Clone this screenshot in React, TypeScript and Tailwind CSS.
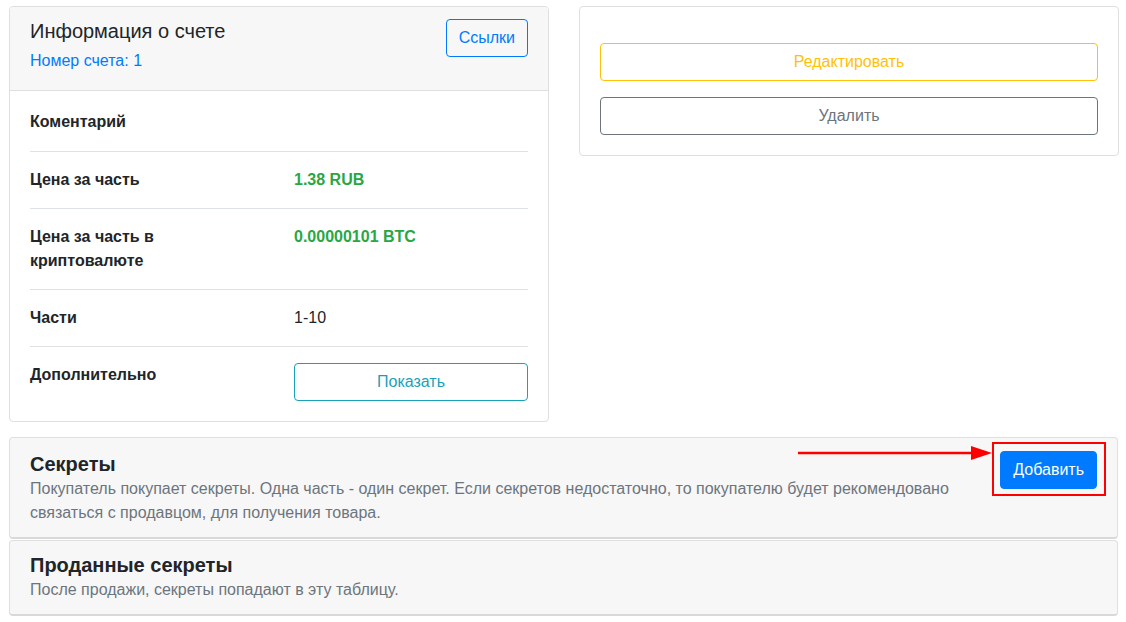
import React from "react";

const font = { fontFamily: '"Liberation Sans", Arial, sans-serif' };

function Row({
  label,
  children,
  first,
  last,
}: {
  label: React.ReactNode;
  children?: React.ReactNode;
  first?: boolean;
  last?: boolean;
}) {
  return (
    <div
      className={
        "flex " +
        (first ? "pb-[17px] " : "pt-[16px] border-t border-[#dee2e6] ") +
        (last ? "" : first ? "" : "pb-[16px]")
      }
    >
      <div className="w-[264px] shrink-0 pr-[15px] font-bold text-[16px] leading-[24px] text-[#212529]">
        <div className="max-w-[225px]">{label}</div>
      </div>
      <div className="flex-1 text-[16px] leading-[24px] text-[#212529]">{children}</div>
    </div>
  );
}

export default function App() {
  return (
    <div className="min-h-[622px] bg-white pl-[9px] pr-[7px] pt-[6px]" style={font}>
      <div className="grid grid-cols-2 gap-[30px] items-start">
        {/* Left card */}
        <div className="border border-[#dfdfdf] rounded-[4px] overflow-hidden">
          <div className="bg-[#f7f7f7] border-b border-[#dfdfdf] pl-[20px] pr-[20px] pt-[12px] pb-[17px] flex justify-between items-start">
            <div>
              <div className="text-[20px] leading-[24px] text-[#212529]">Информация о счете</div>
              <div className="mt-[6px] text-[16px] leading-[24px] text-[#007bff]">Номер счета: 1</div>
            </div>
            <button className="h-[38px] px-[12px] border border-[#007bff] rounded-[4px] text-[#007bff] text-[16px] leading-[24px] bg-transparent">
              Ссылки
            </button>
          </div>
          <div className="px-[20px] pt-[19px] pb-[20px]">
            <Row label="Коментарий" first />
            <Row label="Цена за часть">
              <span className="font-bold text-[#28a745]">1.38 RUB</span>
            </Row>
            <Row label="Цена за часть в криптовалюте">
              <span className="font-bold text-[#28a745]">0.00000101 BTC</span>
            </Row>
            <Row label="Части">1-10</Row>
            <Row label="Дополнительно" last>
              <button className="w-full h-[38px] border border-[#17a2b8] rounded-[4px] text-[#17a2b8] text-[16px] bg-transparent">
                Показать
              </button>
            </Row>
          </div>
        </div>

        {/* Right card */}
        <div className="border border-[#dfdfdf] rounded-[4px] px-[20px] pt-[36px] pb-[20px] flex flex-col gap-[16px]">
          <button className="w-full h-[38px] border border-[#ffc107] rounded-[4px] text-[#ffc107] text-[16px] bg-transparent">
            Редактировать
          </button>
          <button className="w-full h-[38px] border border-[#6c757d] rounded-[4px] text-[#6c757d] text-[16px] bg-transparent">
            Удалить
          </button>
        </div>
      </div>

      {/* Secrets card */}
      <div className="mt-[15px] mr-[1px] bg-[#f7f7f7] border border-[#dfdfdf] border-b-2 border-b-[#d9d9d9] rounded-[4px] pl-[20px] pr-[20px] pt-[13px] pb-[12px] flex justify-between items-start">
        <div className="w-[960px]">
          <div className="font-bold text-[20px] leading-[24px] text-[#212529] mt-[1px]">Секреты</div>
          <div className="mt-[1px] text-[16px] leading-[24px] text-[#6c757d]">
            Покупатель покупает секреты. Одна часть - один секрет. Если секретов недостаточно, то покупателю будет
            рекомендовано связаться с продавцом, для получения товара.
          </div>
        </div>
        <div className="relative">
          <button className="h-[38px] px-[12px] bg-[#007bff] border border-[#007bff] rounded-[4px] text-white text-[16px] leading-[24px]">
            Добавить
          </button>
          <span className="absolute left-[-8px] right-[-9px] top-[-9px] bottom-[-7px] border-2 border-[#ff0000] pointer-events-none" />
          <svg
            className="absolute left-[-202px] top-[-6px]"
            width="194"
            height="16"
            viewBox="0 0 194 16"
          >
            <line x1="0" y1="8" x2="176" y2="8" stroke="#ff0000" strokeWidth="2.5" />
            <polygon points="173,1 194,8 173,15" fill="#ff0000" />
          </svg>
        </div>
      </div>

      {/* Sold secrets card */}
      <div className="mt-[1px] mr-[1px] bg-[#f7f7f7] border border-[#dfdfdf] border-b-2 border-b-[#d9d9d9] rounded-[4px] px-[20px] pt-[12px] pb-[12px]">
        <div className="font-bold text-[20px] leading-[24px] text-[#212529]">Проданные секреты</div>
        <div className="mt-[1px] text-[16px] leading-[24px] text-[#6c757d]">
          После продажи, секреты попадают в эту таблицу.
        </div>
      </div>
    </div>
  );
}
